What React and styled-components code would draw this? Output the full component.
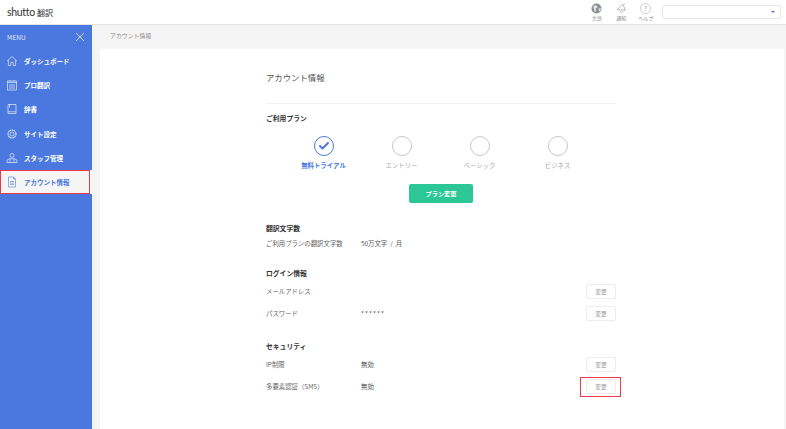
import React from 'react';
import styled, { createGlobalStyle } from 'styled-components';
import { Check } from 'lucide-react';

const GlobalStyle = createGlobalStyle`
  html, body { margin: 0; padding: 0; height: 100%; }
  body {
    font-family: "Noto Sans CJK JP", "Noto Sans", sans-serif;
    background: #f5f5f5;
    overflow: hidden;
  }
`;

const Page = styled.div`
  width: 786px;
  height: 429px;
  display: flex;
  flex-direction: column;
  overflow: hidden;
  position: relative;
`;

const Header = styled.header`
  height: 24px;
  flex: none;
  background: #fff;
  border-bottom: 1px solid #e4e4e4;
  display: flex;
  align-items: center;
  justify-content: space-between;
  padding: 0 5px 0 7px;
`;

const Logo = styled.div`
  display: flex;
  align-items: baseline;
  gap: 2px;
  color: #333;
  font-size: 10.5px;
  font-weight: 400;
  font-family: "Lato", "Liberation Sans", sans-serif;
  letter-spacing: -0.3px;
  span { font-family: "Noto Sans CJK JP", sans-serif; font-size: 8px; letter-spacing: 0; }
`;

const HeaderRight = styled.div`
  display: flex;
  align-items: center;
`;

const HeaderTool = styled.div`
  width: 24.5px;
  display: flex;
  flex-direction: column;
  align-items: center;
  font-size: 5px;
  line-height: 6px;
  color: #888;
  svg { display: block; margin-bottom: 1px; }
`;

const SelectBox = styled.div`
  width: 119px;
  height: 14px;
  box-sizing: border-box;
  margin-left: 4px;
  background: #fff;
  border: 1px solid #e6e8ef;
  border-radius: 2px;
  display: flex;
  align-items: center;
  justify-content: flex-end;
  padding-right: 5px;
  &::after {
    content: "";
    border-left: 2px solid transparent;
    border-right: 2px solid transparent;
    border-top: 2px solid #4a78de;
  }
`;

const Body = styled.div`
  flex: 1;
  display: flex;
  min-height: 0;
`;

const Sidebar = styled.aside`
  width: 92px;
  flex: none;
  background: #4a78de;
  display: flex;
  flex-direction: column;
`;

const MenuHead = styled.div`
  height: 23.5px;
  display: flex;
  align-items: center;
  justify-content: space-between;
  padding: 0 7px;
  color: #e3ebfb;
  font-size: 6.5px;
  letter-spacing: 0.1px;
`;

const NavItem = styled.div`
  height: 24.3px;
  display: flex;
  align-items: center;
  gap: 6px;
  padding-left: 6px;
  font-size: 6.5px;
  font-weight: 700;
  background: ${p => (p.$active ? '#f5f5f5' : 'transparent')};
  color: ${p => (p.$active ? '#4a78de' : '#fff')};
  svg { flex: none; }
`;

const Main = styled.main`
  flex: 1;
  min-width: 0;
  display: flex;
  flex-direction: column;
`;

const Crumb = styled.div`
  height: 24px;
  box-sizing: border-box;
  padding: 0 0 4px 18px;
  display: flex;
  align-items: center;
  font-size: 5.9px;
  color: #888;
`;

const Card = styled.section`
  flex: 1;
  margin: 0 2px 0 8px;
  background: #fff;
  padding: 21px 0 0 166px;
`;

const Content = styled.div`
  width: 350px;
`;

const Title = styled.h1`
  margin: 0;
  height: 33px;
  font-size: 8.4px;
  font-weight: 400;
  line-height: 14px;
  color: #555;
  border-bottom: 1px solid #f3f3f3;
`;

const SectionTitle = styled.h2`
  margin: 0;
  font-size: 6.8px;
  line-height: 10px;
  font-weight: 700;
  color: #333;
`;

const PlanSection = styled.div`
  padding-top: 9px;
`;

const PlanRow = styled.div`
  display: grid;
  grid-template-columns: repeat(4, 78px);
  justify-content: center;
  margin: 13px 0 0 -1px;
`;

const Plan = styled.div`
  display: flex;
  flex-direction: column;
  align-items: center;
  gap: 4.5px;
  font-size: 6.4px;
  line-height: 9px;
  font-weight: ${p => (p.$on ? 700 : 400)};
  color: ${p => (p.$on ? '#4a78de' : '#aaa')};
`;

const PlanCircle = styled.div`
  width: 20px;
  height: 20px;
  box-sizing: border-box;
  border-radius: 50%;
  border: 1.3px solid ${p => (p.$on ? '#4a78de' : '#c8c8c8')};
  display: flex;
  align-items: center;
  justify-content: center;
  color: #4a78de;
`;

const PlanButton = styled.button`
  display: block;
  width: 64px;
  height: 19px;
  margin: 14.5px auto 0;
  padding: 0;
  border: none;
  border-radius: 2px;
  background: #2dc795;
  color: #fff;
  font-family: inherit;
  font-size: 6.2px;
  font-weight: 700;
`;

const Section = styled.div`
  margin-top: ${p => p.$gap}px;
`;

const Rows = styled.div`
  margin-top: 2.5px;
`;

const Row = styled.div`
  height: ${p => p.$h || 22}px;
  display: grid;
  grid-template-columns: 95px 1fr auto;
  align-items: center;
  font-size: 6.4px;
  color: #666;
  text-spacing-trim: space-all;
`;

const Value = styled.span`
  color: #555;
  word-spacing: 1.5px;
`;

const Masked = styled.span`
  color: #555;
  letter-spacing: 1px;
`;

const ChangeButton = styled.button`
  width: 30px;
  height: 15px;
  padding: 0;
  background: #fff;
  border: 1px solid #ececec;
  border-radius: 2px;
  font-family: inherit;
  font-size: 5.8px;
  color: #999;
`;

const Highlight = styled.div`
  position: absolute;
  box-sizing: border-box;
  border: 1.5px solid #ee3a48;
  left: ${p => p.$x}px;
  top: ${p => p.$y}px;
  width: ${p => p.$w}px;
  height: ${p => p.$h}px;
  pointer-events: none;
`;

const Ico = ({ children, s = 12 }) => (
  <svg width={s} height={s} viewBox="0 0 12 12" fill="none" stroke="currentColor" strokeWidth="0.7" strokeOpacity="0.85">
    {children}
  </svg>
);

const navItems = [
  { label: 'ダッシュボード', icon: <path d="M1 6.2 6 1.5l5 4.7M2.4 5v5.5h2.4V7.5h2.4v3h2.4V5" /> },
  { label: 'プロ翻訳', icon: <><rect x="1.5" y="2" width="9" height="9" /><path d="M1.5 3.5h9M4 1v1.5M8 1v1.5M4 5v5M6 5v5M8 5v5" /></> },
  { label: '辞書', icon: <><path d="M2 1.5h8v9H2zM2 8.8h8" /><path d="M3.5 1.5v3" /></> },
  { label: 'サイト設定', icon: <><circle cx="6" cy="6" r="2" /><circle cx="6" cy="6" r="4" strokeDasharray="1.3 0.5" strokeWidth="1.2" /></> },
  { label: 'スタッフ管理', icon: <><circle cx="6" cy="3.5" r="2" /><path d="M1 10.5V8.2l2.5-1.4h5L11 8.2v2.3zM4 7v3.5M8 7v3.5" /></> },
  { label: 'アカウント情報', active: true, icon: <><path d="M2.5 1h5l2 2v8h-7zM7.5 1v2h2" /><path d="M4 5.5h4M4 7h4M4 8.5h4" /></> },
];

const plans = ['無料トライアル', 'エントリー', 'ベーシック', 'ビジネス'];

export default function App() {
  return (
    <Page>
      <GlobalStyle />
      <Header>
        <Logo>shutto<span>翻訳</span></Logo>
        <HeaderRight>
          <HeaderTool>
            <svg width="11" height="11" viewBox="0 0 10 10"><circle cx="5" cy="5" r="4.6" fill="#8a8f96" /><path d="M2 2.5 5 2l1 2-2 1.5L5 8 3 7.5zM7 5l2-.5-.5 2.5L7 7.5z" fill="#dfe2e6" /></svg>
            言語
          </HeaderTool>
          <HeaderTool>
            <svg width="11" height="11" viewBox="0 0 10 10" fill="none" stroke="#999" strokeWidth="0.6"><path d="M1 6 6.2 1.2 8.6 6.6zM3.5 7.5l1.6 1.3 1.4-1.6M7 1.5 8.5.6" /></svg>
            通知
          </HeaderTool>
          <HeaderTool>
            <svg width="11" height="11" viewBox="0 0 10 10" fill="none" stroke="#aaa" strokeWidth="0.5"><circle cx="5" cy="5" r="4.6" /><text x="5" y="7.2" fontSize="6" textAnchor="middle" fill="#aaa" stroke="none">?</text></svg>
            ヘルプ
          </HeaderTool>
          <SelectBox />
        </HeaderRight>
      </Header>
      <Body>
        <Sidebar>
          <MenuHead>
            MENU
            <svg width="10" height="10" viewBox="0 0 10 10" stroke="#fff" strokeWidth="0.7"><path d="M1 1l8 8M9 1l-8 8" /></svg>
          </MenuHead>
          {navItems.map(n => (
            <NavItem key={n.label} $active={n.active}>
              <Ico>{n.icon}</Ico>
              {n.label}
            </NavItem>
          ))}
        </Sidebar>
        <Main>
          <Crumb>アカウント情報</Crumb>
          <Card>
            <Content>
              <Title>アカウント情報</Title>
              <PlanSection>
                <SectionTitle>ご利用プラン</SectionTitle>
                <PlanRow>
                  {plans.map((p, i) => (
                    <Plan key={p} $on={i === 0}>
                      <PlanCircle $on={i === 0}>
                        {i === 0 && <Check size={12} strokeWidth={4} />}
                      </PlanCircle>
                      {p}
                    </Plan>
                  ))}
                </PlanRow>
                <PlanButton>プラン変更</PlanButton>
              </PlanSection>
              <Section $gap={20}>
                <SectionTitle>翻訳文字数</SectionTitle>
                <Row $h={20}><span>ご利用プランの翻訳文字数</span><Value>50万文字 / 月</Value></Row>
              </Section>
              <Section $gap={15}>
                <SectionTitle>ログイン情報</SectionTitle>
                <Rows>
                  <Row><span>メールアドレス</span><span /><ChangeButton>変更</ChangeButton></Row>
                  <Row><span>パスワード</span><Masked>******</Masked><ChangeButton>変更</ChangeButton></Row>
                </Rows>
              </Section>
              <Section $gap={16}>
                <SectionTitle>セキュリティ</SectionTitle>
                <Rows>
                  <Row><span>IP制限</span><Value>無効</Value><ChangeButton>変更</ChangeButton></Row>
                  <Row><span>多要素認証（SMS）</span><Value>無効</Value><ChangeButton>変更</ChangeButton></Row>
                </Rows>
              </Section>
            </Content>
          </Card>
        </Main>
      </Body>
      <Highlight $x={0} $y={170} $w={90} $h={24} />
      <Highlight $x={580} $y={377} $w={41} $h={20} />
    </Page>
  );
}
